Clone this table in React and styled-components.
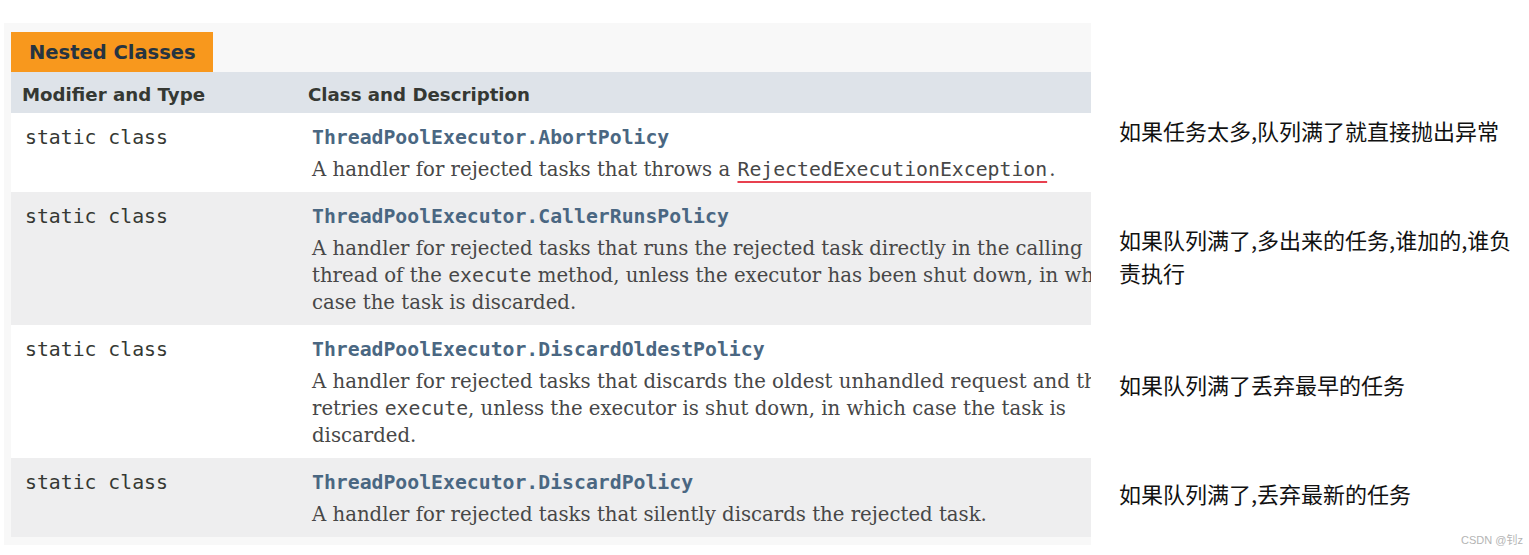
import React from 'react';
import styled, { createGlobalStyle } from 'styled-components';

const rows = [
  {
    name: 'ThreadPoolExecutor.AbortPolicy',
    lines: [
      ['A handler for rejected tasks that throws a ', { mark: 'RejectedExecutionException' }, '.'],
    ],
  },
  {
    name: 'ThreadPoolExecutor.CallerRunsPolicy',
    lines: [
      ['A handler for rejected tasks that runs the rejected task directly in the calling'],
      ['thread of the ', { code: 'execute' }, ' method, unless the executor has been shut down, in which'],
      ['case the task is discarded.'],
    ],
  },
  {
    name: 'ThreadPoolExecutor.DiscardOldestPolicy',
    lines: [
      ['A handler for rejected tasks that discards the oldest unhandled request and then'],
      ['retries ', { code: 'execute' }, ', unless the executor is shut down, in which case the task is'],
      ['discarded.'],
    ],
  },
  {
    name: 'ThreadPoolExecutor.DiscardPolicy',
    lines: [['A handler for rejected tasks that silently discards the rejected task.']],
  },
];

const notes = [
  { text: '如果任务太多,队列满了就直接抛出异常', gap: 114 },
  { text: '如果队列满了,多出来的任务,谁加的,谁负责执行', gap: 77 },
  { text: '如果队列满了丢弃最早的任务', gap: 79 },
  { text: '如果队列满了,丢弃最新的任务', gap: 77 },
];

const renderPart = (part, i) => {
  if (typeof part === 'string') return part;
  if (part.code) return <Code key={i}>{part.code}</Code>;
  return <Marked key={i}>{part.mark}</Marked>;
};

const App = () => {
  return (
    <Page>
      <GlobalStyle />
      <Panel>
        <Tab>Nested Classes</Tab>
        <Table>
          <HeaderRow>
            <HeadCell>Modifier and Type</HeadCell>
            <HeadCell $second>Class and Description</HeadCell>
          </HeaderRow>
          {rows.map((row, i) => (
            <Row key={row.name} $alt={i % 2 === 1}>
              <TypeCell>static class</TypeCell>
              <DescCell>
                <ClassName>{row.name}</ClassName>
                <Desc>
                  {row.lines.map((line, j) => (
                    <Line key={j}>{line.map(renderPart)}</Line>
                  ))}
                </Desc>
              </DescCell>
            </Row>
          ))}
        </Table>
      </Panel>

      <Notes>
        {notes.map((note) => (
          <Note key={note.text} $gap={note.gap}>
            {note.text}
          </Note>
        ))}
        <Watermark>CSDN @钊z</Watermark>
      </Notes>
    </Page>
  );
};

const GlobalStyle = createGlobalStyle`
  html, body {
    margin: 0;
    padding: 0;
    background: #ffffff;
  }
`;

const Page = styled.div`
  display: flex;
  height: 555px;
  overflow: hidden;
  background: #ffffff;
`;

const Panel = styled.div`
  flex-shrink: 0;
  box-sizing: border-box;
  width: 1087px;
  height: 522px;
  margin: 23px 0 0 4px;
  padding: 9px 0 8px 7px;
  background: #f8f8f8;
  overflow: hidden;
`;

const Tab = styled.div`
  box-sizing: border-box;
  width: 202px;
  height: 40px;
  padding: 2px 0 0 18px;
  background: #f8981d;
  color: #253441;
  font-family: "DejaVu Sans", sans-serif;
  font-weight: bold;
  font-size: 19.5px;
  line-height: 38px;
`;

const Table = styled.div`
  display: flex;
  flex-direction: column;
`;

const HeaderRow = styled.div`
  display: grid;
  grid-template-columns: 287px 1fr;
  height: 41px;
  background: #dee3e9;
`;

const HeadCell = styled.div`
  display: flex;
  align-items: center;
  padding: 3px 0 0 ${(p) => (p.$second ? '10px' : '11px')};
  color: #353833;
  font-family: "DejaVu Sans", sans-serif;
  font-weight: bold;
  font-size: 18.2px;
  white-space: nowrap;
`;

const Row = styled.div`
  display: grid;
  grid-template-columns: 287px 1fr;
  padding: 11px 0 9px;
  background: ${(p) => (p.$alt ? '#eeeeef' : '#ffffff')};
`;

const TypeCell = styled.div`
  padding-left: 14px;
  color: #353833;
  font-family: "DejaVu Sans Mono", monospace;
  font-size: 19.8px;
  line-height: 27px;
`;

const DescCell = styled.div`
  padding-left: 14px;
  white-space: nowrap;
`;

const ClassName = styled.div`
  color: #4a6782;
  font-family: "DejaVu Sans Mono", monospace;
  font-weight: bold;
  font-size: 19.8px;
  line-height: 27px;
`;

const Desc = styled.div`
  margin-top: 5px;
  color: #474747;
  font-family: "DejaVu Serif", serif;
  font-size: 19.7px;
  line-height: 27px;
`;

const Line = styled.div``;

const Code = styled.span`
  font-family: "DejaVu Sans Mono", monospace;
  font-size: 19.8px;
`;

const Marked = styled(Code)`
  padding: 0 2px 0 3px;
  margin-left: -2px;
  text-decoration: underline;
  text-decoration-color: #e8404f;
  text-decoration-thickness: 2px;
  text-underline-offset: 5px;
`;

const Notes = styled.div`
  flex: 1;
  display: flex;
  flex-direction: column;
  padding: 0 6px 8px 28px;
`;

const Note = styled.div`
  width: 400px;
  margin-top: ${(p) => p.$gap - 0.5}px;
  color: #111111;
  font-family: "Noto Sans CJK SC", sans-serif;
  font-size: 22px;
  line-height: 33px;
`;

const Watermark = styled.div`
  margin-top: auto;
  align-self: flex-end;
  color: #b4b4b4;
  font-family: "Liberation Sans", "Noto Sans CJK SC", sans-serif;
  font-size: 11px;
`;

export default App;
